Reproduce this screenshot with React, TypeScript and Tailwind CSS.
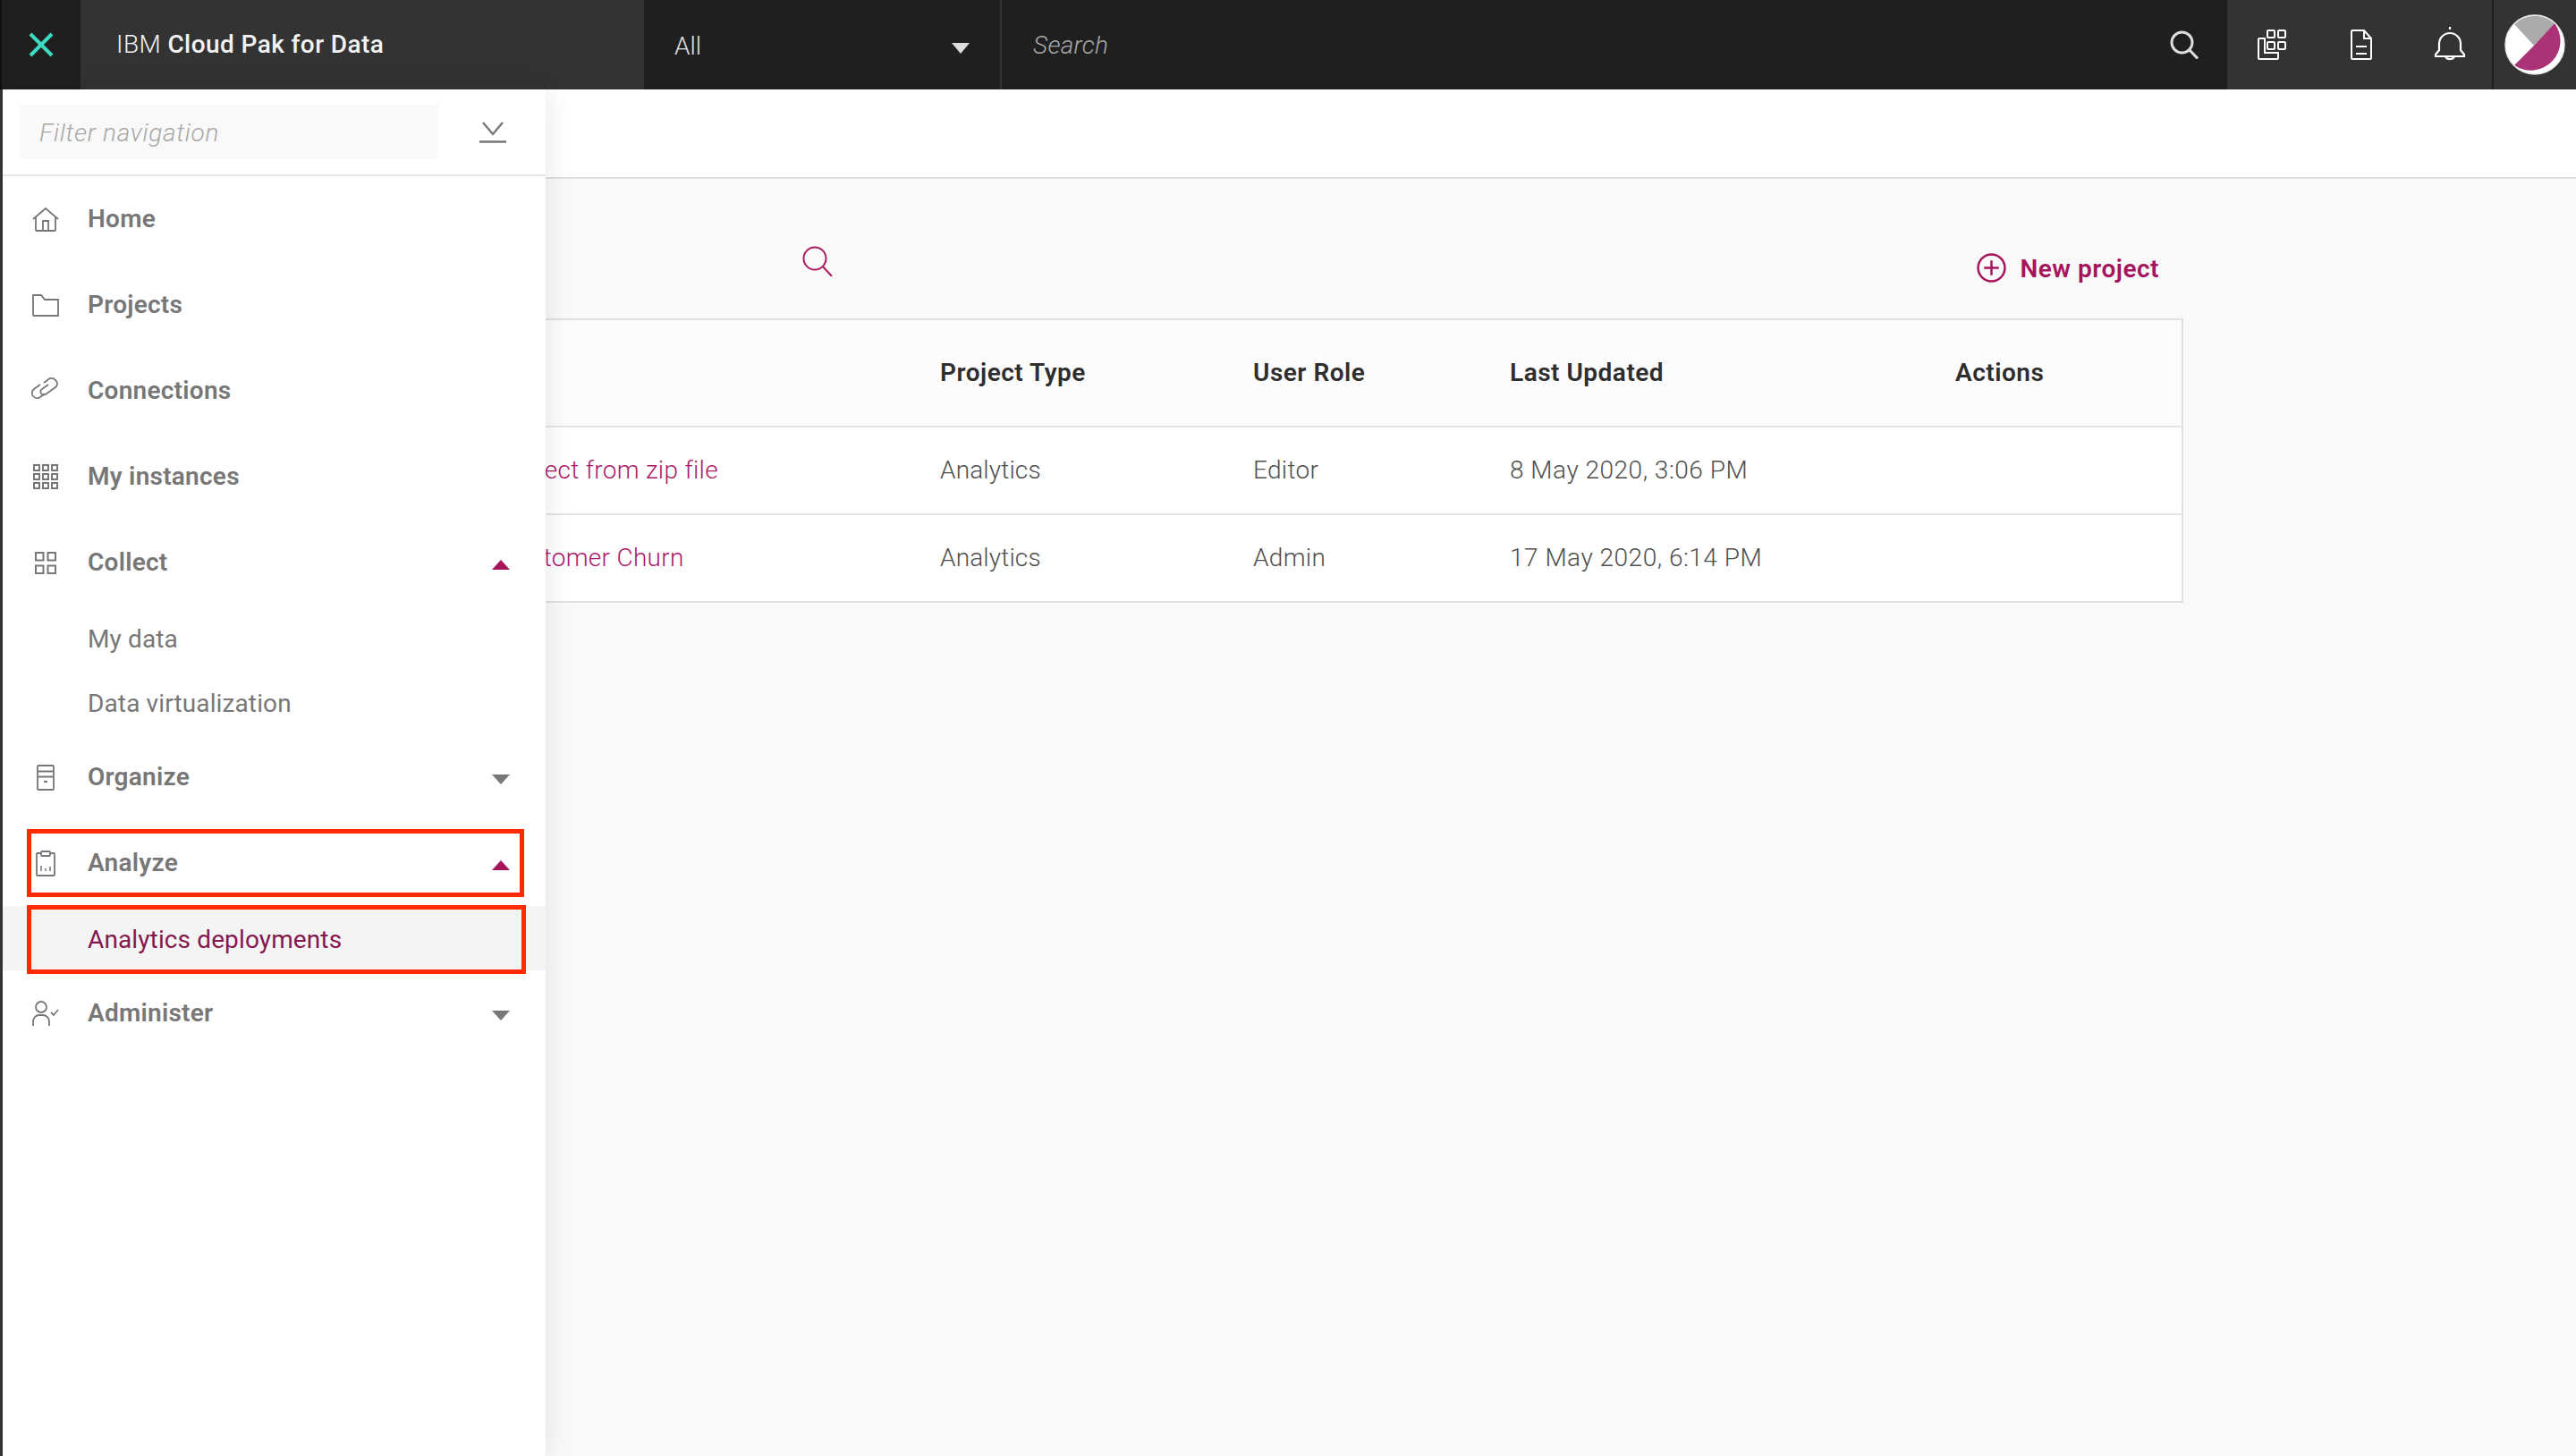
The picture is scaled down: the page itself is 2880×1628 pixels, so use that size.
import React from "react";

const font = { fontFamily: "Roboto, 'Noto Sans', sans-serif" };

function Ic({ children, w, h }: { children: React.ReactNode; w: number; h: number }) {
  return (
    <svg width={w} height={h} viewBox={`0 0 ${w} ${h}`} fill="none" stroke="currentColor" strokeWidth="1.8">
      {children}
    </svg>
  );
}

const HomeI = () => (
  <Ic w={30} h={27}>
    <path d="M1 13 15 1l14 12M4 10.5V25a1 1 0 0 0 1 1h20a1 1 0 0 0 1-1V10.5" />
    <path d="M12 26V15h6v11" />
  </Ic>
);
const FolderI = () => (
  <Ic w={30} h={25}>
    <path d="M1 1h9l4 5h15v18H2a1 1 0 0 1-1-1z" />
  </Ic>
);
const LinkI = () => (
  <div className="-mt-[5px]">
    <Ic w={34} h={26}>
      <path d="M15 6l4-3a6 6 0 0 1 9 0 5 5 0 0 1 0 8l-11 8a4 4 0 0 1-5-1 3.5 3.5 0 0 1 1-5l7-5" />
      <path d="M11 8l-7 5a5.5 5.5 0 0 0-1 8 6 6 0 0 0 8 1l5-4" />
    </Ic>
  </div>
);
const GridI = () => (
  <svg width="28" height="28" viewBox="0 0 28 28" fill="none" stroke="currentColor" strokeWidth="2">
    {[1, 11, 21].map((y) =>
      [1, 11, 21].map((x) => <rect key={`${x}-${y}`} x={x} y={y} width="6" height="6" />)
    )}
  </svg>
);
const QuadI = () => (
  <svg width="24" height="25" viewBox="0 0 24 25" fill="none" stroke="currentColor" strokeWidth="2">
    <rect x="1" y="1" width="8.5" height="8.5" />
    <rect x="14.5" y="1" width="8.5" height="8.5" />
    <rect x="1" y="15.5" width="8.5" height="8.5" />
    <rect x="14.5" y="15.5" width="8.5" height="8.5" />
  </svg>
);
const CabinetI = () => (
  <Ic w={20} h={29}>
    <rect x="1" y="1" width="18" height="27" rx="1" />
    <path d="M1 7.5h18M1 13.5h18M8 19h4" />
  </Ic>
);
const BoardI = () => (
  <Ic w={22} h={29}>
    <rect x="1" y="3" width="20" height="25" rx="1" />
    <rect x="6" y="1" width="10" height="5" rx="1" fill="#fff" />
    <path d="M6 23v-6M11 23v-3M16 23v-5" strokeWidth="1.5" />
  </Ic>
);
const AdminI = () => (
  <Ic w={30} h={28}>
    <circle cx="10" cy="7" r="6" />
    <path d="M1 28v-5a7 7 0 0 1 7-7h4a7 7 0 0 1 7 7v5M21 13l3 3 5-6" />
  </Ic>
);
const Caret = ({ up, color }: { up?: boolean; color: string }) => (
  <svg width="20" height="11" viewBox="0 0 20 11" fill={color} className="mt-[4px]">
    <path d={up ? "M0 11 10 0l10 11z" : "M0 0h20L10 11z"} />
  </svg>
);

function NavRow({ icon, label, open }: { icon: React.ReactNode; label: string; open?: boolean }) {
  return (
    <div className="flex h-[96px] items-center text-[#777777]">
      <div className="flex w-[95px] shrink-0 justify-center">{icon}</div>
      <span className="flex-1 text-[28px] font-semibold tracking-[0.25px]">{label}</span>
      {open === undefined ? null : (
        <div className="pr-[40px]">
          <Caret up={open} color={open ? "#a5145c" : "#777777"} />
        </div>
      )}
    </div>
  );
}

function SubRow({ label, active }: { label: string; active?: boolean }) {
  return (
    <div
      className={`flex h-[72px] items-center pl-[95px] pt-[3px] text-[28px] tracking-[0.12px] ${
        active ? "bg-[#f4f4f4] text-[#85174f]" : "text-[#777777]"
      }`}
    >
      {label}
    </div>
  );
}

const rows = [
  ["Project from zip file", "Analytics", "Editor", "8 May 2020, 3:06 PM"],
  ["Customer Churn", "Analytics", "Admin", "17 May 2020, 6:14 PM"],
];
const gridCols = "grid grid-cols-[521px_350px_287px_498px_1fr]";

export default function App() {
  return (
    <div className="relative flex h-[1628px] w-[2880px] flex-col overflow-hidden bg-[#f9f9f9]" style={font}>
      <header className="flex h-[100px] shrink-0 items-stretch bg-[#1f1f1f] text-[#e0e0e0]">
        <div className="flex w-[90px] shrink-0 items-center justify-center border-l-[2px] border-[#111111] text-[#3ddbc0]">
          <svg width="28" height="28" viewBox="0 0 28 28" stroke="currentColor" strokeWidth="4" fill="none">
            <path d="M2 2l24 24M26 2 2 26" />
          </svg>
        </div>
        <div className="flex w-[630px] shrink-0 items-center bg-[#333333] pl-[40px] text-[28px] tracking-[0.42px] text-[#f2f2f2]">
          <span className="font-light">IBM&nbsp;</span>
          <span className="font-medium">Cloud Pak for Data</span>
        </div>
        <div className="flex w-[400px] shrink-0 items-center justify-between border-r-[2px] border-[#333333] pl-[34px] pr-[34px] text-[28px] font-light">
          <span className="pt-[3px]">All</span>
          <svg width="20" height="12" viewBox="0 0 20 12" fill="#dddddd" className="mt-[8px]">
            <path d="M0 0h20L10 12z" />
          </svg>
        </div>
        <div className="flex flex-1 items-center justify-between pl-[35px] pr-[32px] text-[28px] font-light italic tracking-[0.3px] text-[#a8a8a8]">
          <span className="pt-[1px]">Search</span>
          <svg width="32" height="32" viewBox="0 0 32 32" fill="none" stroke="#dddddd" strokeWidth="3">
            <circle cx="13.5" cy="13.5" r="11.5" />
            <path d="m21.5 21.5 9.5 10" />
          </svg>
        </div>
        <div className="flex w-[296px] shrink-0 items-center bg-[#333333] pl-[34px] text-white">
          <svg width="32" height="34" viewBox="0 0 32 34" fill="none" stroke="currentColor" strokeWidth="2">
            <rect x="11" y="1" width="8" height="8" rx="1" />
            <rect x="23" y="1" width="8" height="8" rx="1" />
            <rect x="11" y="14" width="8" height="8" rx="1" />
            <rect x="23" y="14" width="8" height="8" rx="1" />
            <path d="M8 10H2a1 1 0 0 0-1 1v21a1 1 0 0 0 1 1h20a1 1 0 0 0 1-1v-6H8z" />
          </svg>
          <svg width="24" height="34" viewBox="0 0 24 34" fill="none" stroke="currentColor" strokeWidth="2" className="ml-[72px]">
            <path d="M1 2a1 1 0 0 1 1-1h13l8 9v22a1 1 0 0 1-1 1H2a1 1 0 0 1-1-1z" />
            <path d="M15 1v9h8M6 19h12M6 27h12" />
          </svg>
          <svg width="36" height="42" viewBox="0 0 36 42" fill="none" stroke="currentColor" strokeWidth="2.2" className="ml-[69px]">
            <path d="M18 1v3M6 20a12 12 0 0 1 24 0v7l4 5v2H2v-2l4-5z" />
            <path d="M13 34a5.5 5.5 0 0 0 10 0" />
          </svg>
        </div>
        <div className="flex w-[94px] shrink-0 items-center border-l-[2px] border-[#1c1c1c] bg-[#333333] pl-[12px]">
          <svg width="68" height="68" viewBox="0 0 68 68">
            <circle cx="34" cy="34" r="33" fill="#ffffff" />
            <path d="M11 11A33 33 0 0 1 56 10L33 35z" fill="#ababab" />
            <path d="M56 10A33 33 0 0 1 11 57L33 35z" fill="#aa3377" />
            <circle cx="34" cy="34" r="33" fill="none" stroke="#e8e8e8" strokeWidth="1.5" />
          </svg>
        </div>
      </header>

      <div className="h-[100px] shrink-0 border-b-[2px] border-[#e0e0e0] bg-white" />

      <main className="flex-1 pl-[530px]">
        <div className="flex h-[156px] w-[1911px] items-start justify-between">
          <svg width="34" height="34" viewBox="0 0 34 34" fill="none" stroke="#ab1a5e" strokeWidth="2" className="ml-[367px] mt-[75px]">
            <circle cx="14" cy="14" r="12.5" />
            <path d="m23 23 10 11" />
          </svg>
          <div className="mr-[27px] mt-[80px] flex items-center gap-[15px] text-[28px] font-semibold tracking-[0.5px] text-[#a5145c]">
            <svg width="33" height="33" viewBox="0 0 32 32" fill="none" stroke="currentColor" strokeWidth="2.4" className="-mt-[3px]">
              <circle cx="16" cy="16" r="14.5" />
              <path d="M16 8v16M8 16h16" />
            </svg>
            <span>New project</span>
          </div>
        </div>
        <div className="w-[1911px] border-y-[2px] border-r-[2px] border-[#e0e0e0] text-[28px]">
          <div className={`${gridCols} h-[120px] items-center border-b-[2px] border-[#e4e4e4] bg-[#fcfcfc] font-semibold tracking-[0.5px] text-[#2e2e2e]`}>
            <span />
            <span>Project Type</span>
            <span>User Role</span>
            <span>Last Updated</span>
            <span>Actions</span>
          </div>
          {rows.map((r, i) => (
            <div
              key={r[0]}
              className={`${gridCols} items-center bg-white font-light text-[#4f4f4f] ${
                i === 0 ? "h-[98px] border-b-[2px] border-[#e4e4e4]" : "h-[96px]"
              }`}
            >
              <span className="pl-[29px] tracking-[0.3px] text-[#ab1a6a]">{r[0]}</span>
              <span className="tracking-[0.15px]">{r[1]}</span>
              <span className="tracking-[0.3px]">{r[2]}</span>
              <span className="tracking-[0.5px]">{r[3]}</span>
              <span />
            </div>
          ))}
        </div>
      </main>

      <aside className="absolute bottom-0 left-0 top-[100px] w-[610px] border-l-[3px] border-[#333333] bg-white shadow-[0_0_30px_rgba(0,0,0,0.1)]">
        <div className="flex h-[97px] items-center justify-between border-b-[2px] border-[#e8e8e8] pb-[2px] pl-[19px] pr-[44px]">
          <div className="flex h-[60px] w-[468px] items-center bg-[#f9f9f9] pl-[22px] pt-[5px] text-[28px] font-light italic tracking-[0.7px] text-[#a8a8a8]">
            Filter navigation
          </div>
          <svg width="30" height="24" viewBox="0 0 30 24" fill="none" stroke="#777777" strokeWidth="2.4" className="mt-[2px]">
            <path d="m4 1 11 13L26 1M0 22.5h30" />
          </svg>
        </div>
        <NavRow icon={<HomeI />} label="Home" />
        <NavRow icon={<FolderI />} label="Projects" />
        <NavRow icon={<LinkI />} label="Connections" />
        <NavRow icon={<GridI />} label="My instances" />
        <NavRow icon={<QuadI />} label="Collect" open={true} />
        <SubRow label="My data" />
        <SubRow label="Data virtualization" />
        <NavRow icon={<CabinetI />} label="Organize" open={false} />
        <NavRow icon={<BoardI />} label="Analyze" open={true} />
        <SubRow label="Analytics deployments" active />
        <NavRow icon={<AdminI />} label="Administer" open={false} />
      </aside>

      <div className="absolute left-[30px] top-[927px] h-[76px] w-[556px] border-[5px] border-[#ff2a00]" />
      <div className="absolute left-[30px] top-[1012px] h-[77px] w-[558px] border-[5px] border-[#ff2a00]" />
    </div>
  );
}
